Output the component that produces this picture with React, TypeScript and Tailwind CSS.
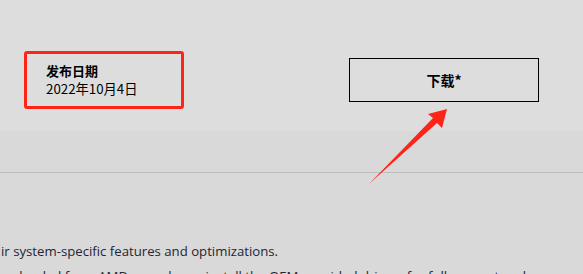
import React from "react";

export default function App() {
  return (
    <div className="relative w-[583px] h-[274px] overflow-hidden bg-[#d9d9d9]">
      <div className="flex h-[131px] bg-[#dddddd]">
        <div
          className="ml-[24px] mt-[51px] w-[160px] h-[58px] border-[3px] border-[#ff2418] rounded-[3px] pl-[19px] pt-[8px] text-[13px] leading-[18px] text-black"
          style={{ fontFamily: '"Noto Sans CJK SC", "Noto Sans", sans-serif' }}
        >
          <div className="font-bold">发布日期</div>
          <div className="text-[13.3px]">2022年10月4日</div>
        </div>
        <div
          className="ml-[165px] mt-[58px] w-[190px] h-[44px] border border-black flex items-center justify-center text-[14px] font-bold text-black"
          style={{ fontFamily: '"Noto Sans CJK SC", "Noto Sans", sans-serif' }}
        >
          下载*
        </div>
      </div>
      <div className="mt-[41px] h-px bg-[#bcbcbc]" />
      <div
        className="mt-[66px] pl-[1px] text-[13.2px] leading-[24px] text-[#1f2633] whitespace-nowrap"
        style={{ fontFamily: '"Open Sans", "Noto Sans", sans-serif' }}
      >
        <p>ir system-specific features and optimizations.</p>
        <p className="mt-[1px]">wnloaded from AMD may also uninstall the OEM-provided drivers for full support and</p>
      </div>
      <svg
        className="absolute left-0 top-0 pointer-events-none"
        width="583"
        height="274"
        viewBox="0 0 583 274"
      >
        <polygon
          points="369,184 437,123 442,128 447,109 428,114 433,118 369,184"
          fill="#ff2418"
        />
      </svg>
    </div>
  );
}
